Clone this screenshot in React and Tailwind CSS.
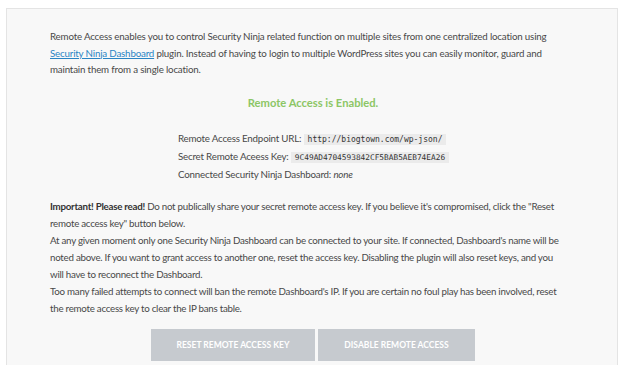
import React from 'react';

const font = { fontFamily: '"Segoe UI", Lato, sans-serif' };
const mono = "bg-[#ebebeb] px-1 py-px font-['DejaVu_Sans_Mono'] text-[#333]";

const App = () => {
  return (
    <div className="min-h-[365px] bg-white pt-2 px-[6px] text-[#484848]" style={font}>
      <div className="border border-[#e4e4e4] bg-[#f8f8f8] pl-[43px] pr-[49px] pt-[19px] pb-6 h-[400px]">
        {/* Intro */}
        <p className="text-[9.75px] leading-[16.5px] tracking-[-0.18px]">
          Remote Access enables you to control Security Ninja related function on multiple sites from one centralized location using{' '}
          <a href="#" className="text-[#2a85c4] underline">Security Ninja Dashboard</a> plugin. Instead of having to login to multiple WordPress sites you can easily monitor, guard and maintain them from a single location.
        </p>

        <h3 className="mt-[17px] text-center text-[11.2px] font-bold text-[#8cc665] pl-[8px]">
          Remote Access is Enabled.
        </h3>

        {/* Connection details */}
        <div className="mt-[19px] pl-[128px] text-[9.75px] leading-[17px] tracking-[-0.2px]">
          <div>
            Remote Access Endpoint URL:{' '}
            <code className={`${mono} text-[8px] tracking-normal`}>http://biogtown.com/wp-json/</code>
          </div>
          <div>
            Secret Remote Aceess Key:{' '}
            <code className={`${mono} text-[7.8px] tracking-normal`}>9C49AD4704593842CF5BAB5AEB74EA26</code>
          </div>
          <div>
            Connected Security Ninja Dashboard: <em>none</em>
          </div>
        </div>

        {/* Warning */}
        <div className="mt-[15px] text-[9.75px] leading-[17px] tracking-[-0.26px]">
          <p>
            <b className="text-[#333]">Important! Please read!</b> Do not publically share your secret remote access key. If you believe it's compromised, click the "Reset remote access key" button below.
          </p>
          <p>
            At any given moment only one Security Ninja Dashboard can be connected to your site. If connected, Dashboard's name will be noted above. If you want to grant access to another one, reset the access key. Disabling the plugin will also reset keys, and you will have to reconnect the Dashboard.
          </p>
          <p>
            Too many failed attempts to connect will ban the remote Dashboard's IP. If you are certain no foul play has been involved, reset the remote access key to clear the IP bans table.
          </p>
        </div>

        {/* Actions */}
        <div className="mt-[12px] flex gap-[3px] pl-[101px]">
          <button className="h-[32px] w-[164px] bg-[#c6cacf] text-[8.5px] font-bold uppercase text-white">
            Reset Remote Access Key
          </button>
          <button className="h-[32px] w-[157px] bg-[#c6cacf] text-[8.5px] font-bold uppercase text-white">
            Disable Remote Access
          </button>
        </div>
      </div>
    </div>
  );
};

export default App;
